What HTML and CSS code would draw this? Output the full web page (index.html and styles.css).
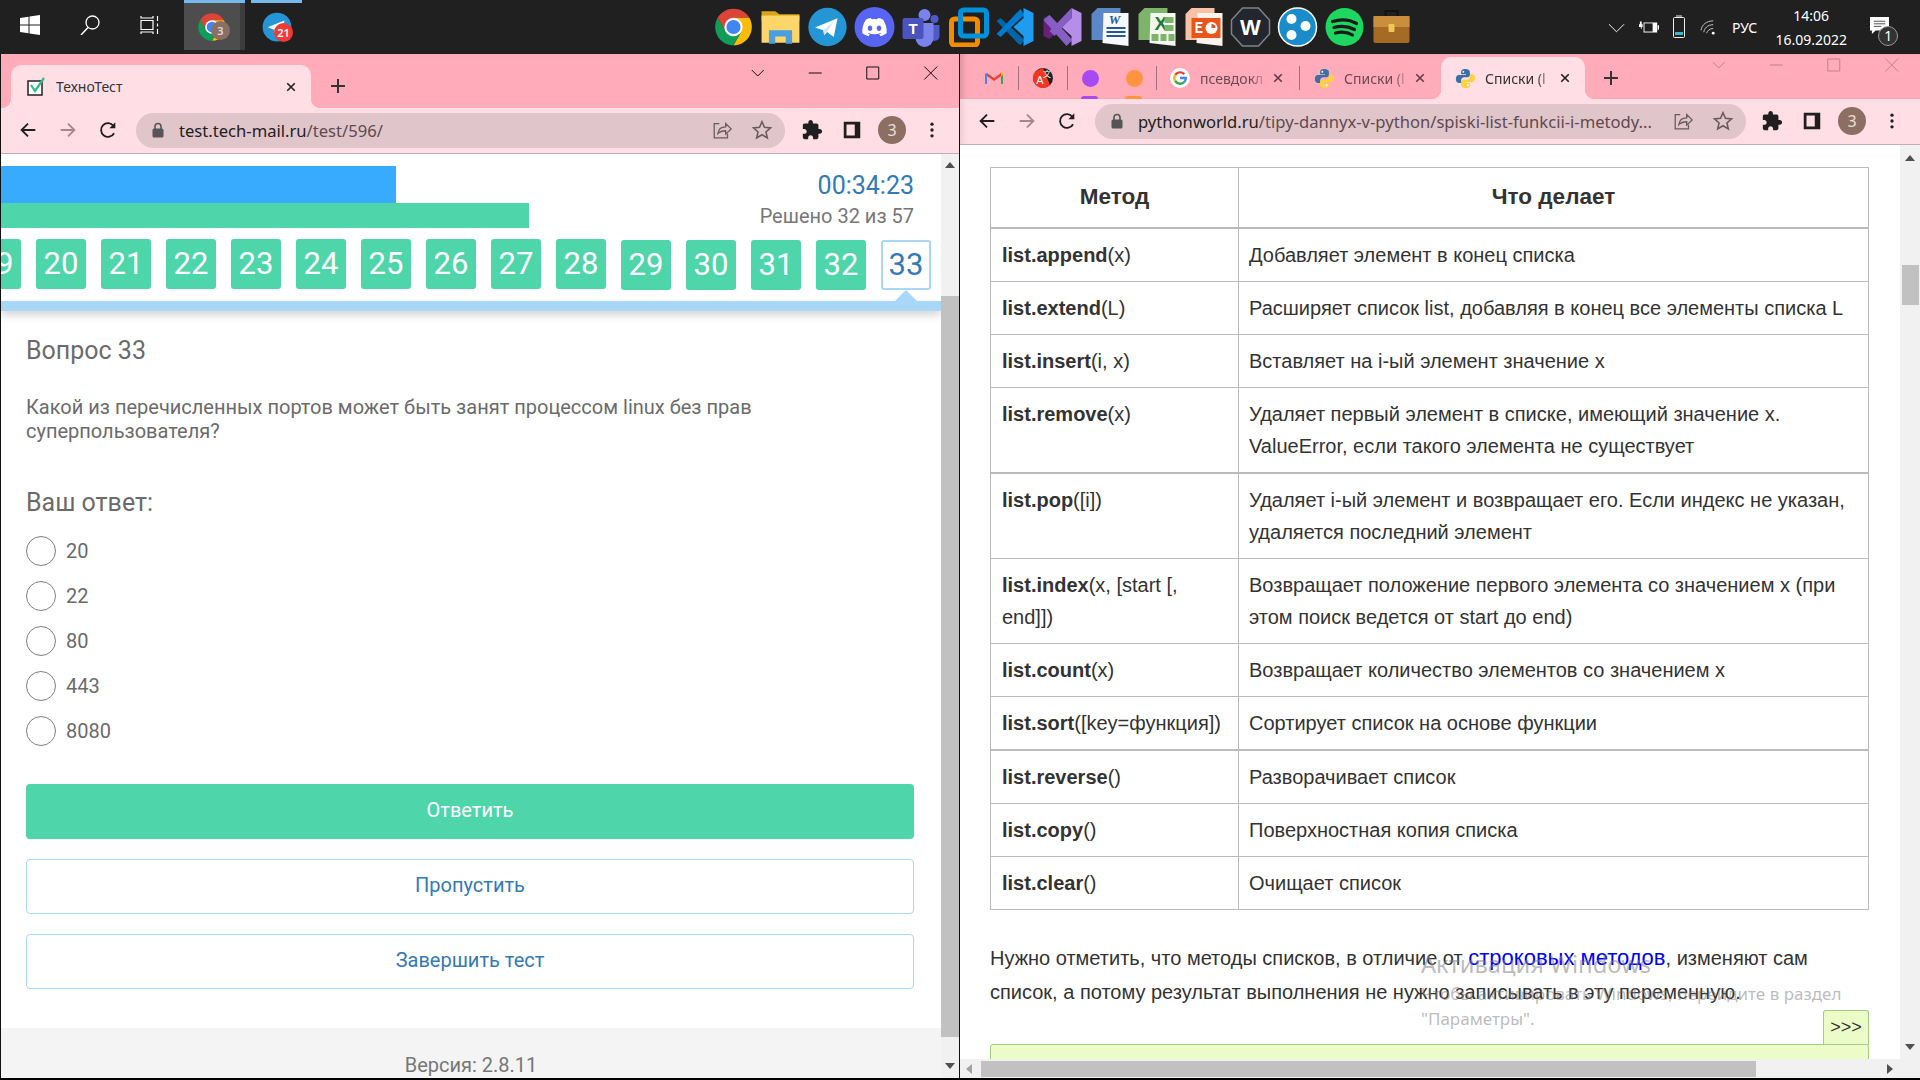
FILE: index.html
```html
<!DOCTYPE html>
<html lang="ru">
<head>
    <meta charset="UTF-8">
    <title>ТехноТест</title>
    <link rel="stylesheet" href="styles.css">
</head>
<body>

    <!-- Shared icons -->
    <svg class="sprite">
        <symbol id="i-chrome" viewBox="0 0 48 48">
            <path fill="#db4437" d="M43.05 13H24L14.5 29.5 4.95 13A22 22 0 0 1 43.05 13Z"/>
            <path fill="#fbbc05" d="M43.05 13A22 22 0 0 1 24 46L33.5 29.5 24 13Z"/>
            <path fill="#0f9d58" d="M24 46A22 22 0 0 1 4.95 13L14.5 29.5H33.5Z"/>
            <circle cx="24" cy="24" r="11" fill="#fff"/>
            <circle cx="24" cy="24" r="8.5" fill="#4285f4"/>
        </symbol>
        <symbol id="i-telegram" viewBox="0 0 48 48">
            <circle cx="24" cy="24" r="23" fill="#2496d6"/>
            <path fill="#fff" d="M9 24.5 36 13.5 31.5 36 23.5 30 20 34 19 28Z"/>
            <path fill="#cfe6f3" d="M19 28 31 18 23.5 30 20 34Z"/>
        </symbol>
        <symbol id="i-back" viewBox="0 0 24 24">
            <path fill="none" stroke="currentColor" stroke-width="2" d="M20 12H5M12 5l-7 7 7 7"/>
        </symbol>
        <symbol id="i-forward" viewBox="0 0 24 24">
            <path fill="none" stroke="currentColor" stroke-width="2" d="M4 12h15M12 5l7 7-7 7"/>
        </symbol>
        <symbol id="i-reload" viewBox="0 0 24 24">
            <path fill="none" stroke="currentColor" stroke-width="2" d="M18.6 15.5A7.5 7.5 0 1 1 18 7.6"/>
            <path fill="currentColor" d="M20 3.5v6.5h-6.5z"/>
        </symbol>
        <symbol id="i-lock" viewBox="0 0 16 16">
            <rect x="2.5" y="6.5" width="11" height="9" rx="1.5" fill="currentColor"/>
            <path fill="none" stroke="currentColor" stroke-width="1.6" d="M5 7V4.5a3 3 0 0 1 6 0V7"/>
        </symbol>
        <symbol id="i-share" viewBox="0 0 24 24">
            <path fill="none" stroke="currentColor" stroke-width="1.4" d="M9 5H3.5v15.5H18V16M7.5 16c.5-5 4-7.5 8.5-7.5V5l6 5.8-6 5.7v-3.7c-3.5 0-6.5 1-8.5 3.2z"/>
        </symbol>
        <symbol id="i-star" viewBox="0 0 24 24">
            <path fill="none" stroke="currentColor" stroke-width="1.7" d="M12 3l2.7 6.1 6.6.6-5 4.4 1.5 6.5-5.8-3.4-5.8 3.4 1.5-6.5-5-4.4 6.6-.6z"/>
        </symbol>
        <symbol id="i-puzzle" viewBox="0 0 24 24">
            <path fill="currentColor" d="M20.5 11H19V7c0-1.1-.9-2-2-2h-4V3.5C13 2.12 11.88 1 10.5 1S8 2.12 8 3.5V5H4c-1.1 0-1.99.9-1.99 2v3.8H3.5c1.49 0 2.7 1.21 2.7 2.7s-1.21 2.7-2.7 2.7H2V20c0 1.1.9 2 2 2h3.8v-1.5c0-1.49 1.21-2.7 2.7-2.7 1.49 0 2.7 1.21 2.7 2.7V22H17c1.1 0 2-.9 2-2v-4h1.5c1.38 0 2.5-1.12 2.5-2.5S21.88 11 20.5 11z"/>
        </symbol>
        <symbol id="i-panel" viewBox="0 0 24 24">
            <path fill="currentColor" fill-rule="evenodd" d="M3 3h18v18H3zM6 6v12h9V6z"/>
        </symbol>
        <symbol id="i-dots" viewBox="0 0 24 24">
            <circle cx="12" cy="5" r="2" fill="currentColor"/>
            <circle cx="12" cy="12" r="2" fill="currentColor"/>
            <circle cx="12" cy="19" r="2" fill="currentColor"/>
        </symbol>
        <symbol id="i-close" viewBox="0 0 16 16">
            <path fill="none" stroke="currentColor" stroke-width="2.2" d="M3 3l10 10M13 3L3 13"/>
        </symbol>
        <symbol id="i-plus" viewBox="0 0 16 16">
            <path fill="none" stroke="currentColor" stroke-width="2" d="M8 1v14M1 8h14"/>
        </symbol>
        <symbol id="i-python" viewBox="0 0 24 24">
            <path fill="#3a70a8" d="M12 1c-4 0-5 1.500-5 3.500V7h5.500v1H4.500C2.500 8 1 9.500 1 12.500S2.500 17 4.500 17H7v-3c0-2 1.500-3.500 3.500-3.500h4c1.500 0 2.500-1 2.500-2.500V4.500C17 2.500 15.500 1 12 1z"/>
            <path fill="#fdd23e" d="M12 23c4 0 5-1.500 5-3.500V17h-5.500v-1h8c2 0 3.500-1.500 3.500-4.500S21.500 7 19.500 7H17v3c0 2-1.500 3.500-3.500 3.500h-4C8 13.500 7 14.500 7 16v3.500C7 21.500 8.500 23 12 23z"/>
            <circle cx="9.500" cy="4.300" r="1.100" fill="#fff"/>
            <circle cx="14.500" cy="19.700" r="1.100" fill="#fff"/>
        </symbol>
        <symbol id="i-win-min" viewBox="0 0 16 16">
            <path stroke="currentColor" d="M1 8h13"/>
        </symbol>
        <symbol id="i-win-max" viewBox="0 0 16 16">
            <path fill="none" stroke="currentColor" d="M2 2h12v12H2z"/>
        </symbol>
        <symbol id="i-win-close" viewBox="0 0 16 16">
            <path fill="none" stroke="currentColor" d="M1.500 1.500l13 13M14.500 1.500l-13 13"/>
        </symbol>
        <symbol id="i-chevron" viewBox="0 0 16 16">
            <path fill="none" stroke="currentColor" d="M2 5l6 6 6-6"/>
        </symbol>
    </svg>

    <!-- Windows taskbar -->
    <header class="taskbar">
        <div class="task-cell">
            <svg class="sys-icon" viewBox="0 0 20 20"><path fill="#fff" d="M0 3l8.500-1.200V9.500H0zM9.500 1.600L20 0v9.500H9.500zM0 10.500h8.500v7.700L0 17zM9.500 10.500H20V20L9.500 18.400z"/></svg>
        </div>
        <div class="task-cell">
            <svg class="sys-icon" viewBox="0 0 20 20"><circle cx="12.500" cy="7.500" r="6.500" fill="none" stroke="#fff" stroke-width="1.300"/><path stroke="#fff" stroke-width="1.500" d="M8 12.500L1 20"/></svg>
        </div>
        <div class="task-cell">
            <svg class="sys-icon" viewBox="0 0 20 20"><path fill="none" stroke="#fff" stroke-width="1.200" d="M1 1v2h12V1M1 5.500h12v9H1zM1 19v-2h12v2M17.500 1v5M17.500 8.500v3M17.500 14v5"/></svg>
        </div>
        <div class="task-app task-app-active">
            <svg class="app-icon-small"><use href="#i-chrome"/></svg>
            <span class="badge badge-brown">3</span>
        </div>
        <div class="task-app task-app-open">
            <svg class="app-icon-small"><use href="#i-telegram"/></svg>
            <span class="badge badge-red">21</span>
        </div>

        <div class="pinned">
            <svg class="app-icon"><use href="#i-chrome"/></svg>
            <svg class="app-icon" viewBox="0 0 38 38">
                <path fill="#d9a514" d="M1 4h13l4 3h19v6H1z"/>
                <path fill="#fcd669" d="M1 8h36v26H1z"/>
                <path fill="#4a9fe0" d="M8 35V22h22v13h-6v-7H14v7z"/>
            </svg>
            <svg class="app-icon"><use href="#i-telegram"/></svg>
            <svg class="app-icon" viewBox="0 0 40 40">
                <circle cx="20" cy="20" r="20" fill="#5865f2"/>
                <path fill="#fff" d="M28.500 12.500a20 20 0 0 0-5-1.500l-.6 1.300a18 18 0 0 0-5.800 0l-.6-1.300a20 20 0 0 0-5 1.500C8.300 17.200 7.500 21.800 7.900 26.300a20 20 0 0 0 6.100 3l1.300-2-2-1 .5-.4a14.500 14.500 0 0 0 12.400 0l.5.400-2 1 1.300 2a20 20 0 0 0 6.100-3c.5-5.200-.8-9.700-3.600-13.800zM15.500 24c-1.300 0-2.300-1.200-2.300-2.700s1-2.700 2.300-2.700 2.300 1.200 2.300 2.700-1 2.700-2.300 2.700zm9 0c-1.300 0-2.300-1.200-2.300-2.700s1-2.700 2.300-2.700 2.300 1.200 2.300 2.700-1 2.700-2.300 2.700z"/>
            </svg>
            <svg class="app-icon" viewBox="0 0 40 40">
                <circle cx="33" cy="12" r="4" fill="#5059c9"/>
                <path fill="#5059c9" d="M28 18h10v11a5 5 0 0 1-10 0z"/>
                <circle cx="23" cy="8" r="6" fill="#7b83eb"/>
                <path fill="#7b83eb" d="M14 16h18v15a9 9 0 0 1-18 0z"/>
                <rect x="1" y="11" width="21" height="21" rx="2" fill="#4b53bc"/>
                <text x="11.500" y="27" class="svg-teams">T</text>
            </svg>
            <svg class="app-icon" viewBox="0 0 40 40">
                <rect x="3" y="12" width="26" height="26" rx="3" fill="none" stroke="#f38b00" stroke-width="5"/>
                <rect x="12" y="3" width="26" height="26" rx="3" fill="none" stroke="#0091da" stroke-width="5"/>
            </svg>
            <svg class="app-icon" viewBox="0 0 40 40">
                <path fill="#0065a9" d="M1 14l4-3 24 22-4 5-2-1z"/>
                <path fill="#007acc" d="M1 27l4 3 24-22-4-6z"/>
                <path fill="#1f9cf0" d="M28 1l10 5v28l-10 5zM28 11L18 20l10 9z"/>
            </svg>
            <svg class="app-icon" viewBox="0 0 40 40">
                <path fill="#68217a" d="M1 11l6-3 12 12-12 12-6-3z"/>
                <path fill="#865fc5" d="M7 8l23 25-6 6L1 13z"/>
                <path fill="#b48ee8" d="M29 1l10 5v28l-10 5zM29 11L19 20l10 9z"/>
                <path fill="#865fc5" d="M29 1L7 24l5 5L29 11z"/>
            </svg>
            <svg class="app-icon" viewBox="0 0 40 40">
                <path fill="#5b86c8" d="M8 1h23v32H2V7z"/>
                <path fill="#f5f8fc" d="M14 6h25v33l-26-3z"/>
                <text x="25" y="17" class="svg-word">W</text>
                <path stroke="#2a5699" stroke-width="2" d="M17 21h19M17 25h19M17 29h19"/>
            </svg>
            <svg class="app-icon" viewBox="0 0 40 40">
                <path fill="#7db36a" d="M8 1h23v32H2V7z"/>
                <path fill="#f2f8ee" d="M14 6h25v33l-26-3z"/>
                <text x="18" y="23" class="svg-excel">X</text>
                <path fill="#7fb36d" d="M28 10h9v6h-9zM28 18h9v6h-9zM15 27h7v7h-7zM24 27h6v7h-6zM32 27h6v7h-6z"/>
            </svg>
            <svg class="app-icon" viewBox="0 0 40 40">
                <path fill="#f7c2a5" d="M8 1h23v32H2V7z"/>
                <path fill="#fdf3ec" d="M14 6h25v33l-26-3z"/>
                <path fill="#e9541a" d="M8 11h29v20H8z"/>
                <path fill="#fff" d="M12 15h7v2h-5v2h4v2h-4v3h5v2h-7z"/>
                <circle cx="28" cy="21" r="6" fill="#fff"/>
                <path fill="#e9541a" d="M28 21v-4a4 4 0 0 1 4 4z"/>
            </svg>
            <svg class="app-icon" viewBox="0 0 40 40">
                <path fill="#23262c" stroke="#7d828a" stroke-width="1.500" d="M12 1h16l11 12v14L28 39H12L1 27V13z"/>
                <text x="20" y="28" class="svg-wind">W</text>
            </svg>
            <svg class="app-icon" viewBox="0 0 40 40">
                <circle cx="20" cy="20" r="19" fill="#1b8ccb" stroke="#fff" stroke-width="1.500"/>
                <circle cx="14" cy="12" r="5" fill="#fff"/>
                <circle cx="28" cy="19" r="5" fill="#fff"/>
                <circle cx="14" cy="28" r="5" fill="#fff"/>
            </svg>
            <svg class="app-icon" viewBox="0 0 40 40">
                <circle cx="20" cy="20" r="19" fill="#1ed760"/>
                <path fill="none" stroke="#1b1b1b" stroke-width="3.200" stroke-linecap="round" d="M8 14.500c8-2.500 17-2 24 2M9.500 20.500c7-2 14-1.500 20.500 2M11 26c6-1.500 12-1 17 2"/>
            </svg>
            <svg class="app-icon" viewBox="0 0 40 40">
                <path fill="none" stroke="#111" stroke-width="2" d="M14 9V4h12v5"/>
                <rect x="2" y="9" width="36" height="27" rx="2" fill="#a56a24"/>
                <path fill="#c98f3e" d="M2 9h36v11H2z"/>
                <rect x="17" y="17" width="6" height="8" rx="1" fill="#f3c458"/>
            </svg>
        </div>

        <!-- Tray -->
        <div class="tray">
            <svg class="tray-chevron" viewBox="0 0 18 10"><path fill="none" stroke="#fff" d="M1 1l8 8 8-8"/></svg>
            <svg class="tray-battery" viewBox="0 0 22 16"><path fill="#fff" d="M1 2h2v3h1v3H3v2H2V8H0V5h1zM5 3h15v11H5z"/><path fill="#202020" d="M6 4h9v9H6z"/><path fill="#fff" d="M20.500 6H22v5h-1.500z"/></svg>
            <svg class="tray-phone" viewBox="0 0 14 24"><path fill="#202020" stroke="#eee" d="M2.500 2.500h9a1 1 0 0 1 1 1v18a1 1 0 0 1-1 1h-9a1 1 0 0 1-1-1v-18a1 1 0 0 1 1-1zM4 1h6"/><path fill="#39b6c9" d="M3 17h8v3H3z"/></svg>
            <svg class="tray-wifi" viewBox="0 0 18 18"><path fill="none" stroke="#ccc" d="M1 12C2 6 7 2 14 2M4 14c.5-4 4-8 10-8M7 15c.5-2 3-5 7-5"/><circle cx="14" cy="15" r="1.500" fill="#fff"/></svg>
            <span class="tray-lang">РУС</span>
            <div class="tray-clock">
                <span>14:06</span>
                <span>16.09.2022</span>
            </div>
            <div class="tray-note">
                <svg viewBox="0 0 20 20" preserveAspectRatio="none"><path fill="#fff" d="M0 0h20v16H6l-4 4v-4H0z"/><path stroke="#444" d="M4 5h12M4 8h12M4 11h8"/></svg>
                <span class="note-count">1</span>
            </div>
        </div>
    </header>

    <main class="desktop">

        <!-- Left window -->
        <section class="window window-left">
            <div class="tabstrip tabstrip-left">
                <div class="tab tab-active tab-wide">
                    <svg class="favicon" viewBox="0 0 20 20">
                        <path fill="#fff" stroke="#222" stroke-width="1.500" d="M2 4h14v14H2z"/>
                        <path fill="none" stroke="#2fb98c" stroke-width="2.200" d="M5 8l4 6 9-13"/>
                    </svg>
                    <span class="tab-title">ТехноТест</span>
                    <svg class="tab-close"><use href="#i-close"/></svg>
                </div>
                <svg class="tab-plus"><use href="#i-plus"/></svg>
                <div class="win-controls">
                    <svg><use href="#i-chevron"/></svg>
                    <svg><use href="#i-win-min"/></svg>
                    <svg><use href="#i-win-max"/></svg>
                    <svg><use href="#i-win-close"/></svg>
                </div>
            </div>
            <div class="toolbar">
                <span class="tool"><svg><use href="#i-back"/></svg></span>
                <span class="tool tool-off"><svg><use href="#i-forward"/></svg></span>
                <span class="tool"><svg><use href="#i-reload"/></svg></span>
                <div class="omnibox">
                    <svg class="lock"><use href="#i-lock"/></svg>
                    <span class="url"><b>test.tech-mail.ru</b>/test/596/</span>
                    <span class="omni-tool"><svg><use href="#i-share"/></svg></span>
                    <span class="omni-tool"><svg><use href="#i-star"/></svg></span>
                </div>
                <span class="tool"><svg><use href="#i-puzzle"/></svg></span>
                <span class="tool"><svg><use href="#i-panel"/></svg></span>
                <span class="tool"><span class="avatar">3</span></span>
                <span class="tool"><svg class="dots"><use href="#i-dots"/></svg></span>
            </div>

            <div class="viewport">
                <div class="page test-page">
                    <div class="progress">
                        <div class="bars">
                            <div class="bar bar-time" style="width: 395px"></div>
                            <div class="bar bar-done" style="width: 528px"></div>
                        </div>
                        <div class="stats">
                            <div class="timer">00:34:23</div>
                            <div class="solved">Решено 32 из 57</div>
                        </div>
                    </div>

                    <div class="numbers">
                        <span class="num">19</span>
                        <span class="num">20</span>
                        <span class="num">21</span>
                        <span class="num">22</span>
                        <span class="num">23</span>
                        <span class="num">24</span>
                        <span class="num">25</span>
                        <span class="num">26</span>
                        <span class="num">27</span>
                        <span class="num">28</span>
                        <span class="num num-low">29</span>
                        <span class="num num-low">30</span>
                        <span class="num num-low">31</span>
                        <span class="num num-low">32</span>
                        <span class="num num-low num-current">33</span>
                    </div>
                    <div class="numbers-line"></div>

                    <div class="question">
                        <h2 class="q-title">Вопрос 33</h2>
                        <p class="q-text">Какой из перечисленных портов может быть занят процессом linux без прав суперпользователя?</p>
                        <h3 class="q-answer">Ваш ответ:</h3>
                        <div class="options">
                            <label class="option"><span class="radio"></span>20</label>
                            <label class="option"><span class="radio"></span>22</label>
                            <label class="option"><span class="radio"></span>80</label>
                            <label class="option"><span class="radio"></span>443</label>
                            <label class="option"><span class="radio"></span>8080</label>
                        </div>
                        <button class="btn btn-green">Ответить</button>
                        <button class="btn btn-line">Пропустить</button>
                        <button class="btn btn-line">Завершить тест</button>
                    </div>
                    <footer class="version">Версия: 2.8.11</footer>
                </div>
                <div class="vbar vbar-left">
                    <i class="arrow-up"></i>
                    <b class="thumb"></b>
                    <i class="arrow-down"></i>
                </div>
            </div>
        </section>

        <!-- Right window -->
        <section class="window window-right">
            <div class="tabstrip tabstrip-right">
                <div class="pin">
                    <svg class="favicon" viewBox="0 0 20 20">
                        <path fill="#ea4335" d="M3 5l7 5 7-5v3l-7 5-7-5z"/>
                        <path fill="#4285f4" d="M1 6l2-1v11H1z"/>
                        <path fill="#34a853" d="M17 5l2 1v10h-2z"/>
                        <path fill="#fbbc05" d="M17 5l2-1v3l-2 1z"/>
                    </svg>
                </div>
                <i class="sep"></i>
                <div class="pin">
                    <svg class="favicon" viewBox="0 0 20 20">
                        <circle cx="10" cy="10" r="10" fill="#222"/>
                        <path fill="#f4361f" d="M10 0L17 17A10 10 0 0 1 10 20 10 10 0 0 1 3 3z"/>
                        <text x="7" y="16" class="svg-a">A</text>
                        <text x="14" y="9" class="svg-han">文</text>
                    </svg>
                </div>
                <i class="sep"></i>
                <div class="pin pin-group pin-purple"><span class="dot"></span></div>
                <div class="pin pin-group pin-orange"><span class="dot"></span></div>
                <i class="sep"></i>
                <div class="tab tab-plain">
                    <svg class="favicon" viewBox="0 0 20 20">
                        <circle cx="10" cy="10" r="10" fill="#fff"/>
                        <path fill="none" stroke="#ea4335" stroke-width="2.400" d="M14.300 6.200A5.800 5.800 0 0 0 5.200 7"/>
                        <path fill="none" stroke="#fbbc05" stroke-width="2.400" d="M5.200 7a5.800 5.800 0 0 0 0 6"/>
                        <path fill="none" stroke="#34a853" stroke-width="2.400" d="M5.200 13a5.800 5.800 0 0 0 9.300.7"/>
                        <path fill="none" stroke="#4285f4" stroke-width="2.400" d="M14.500 13.700A5.800 5.800 0 0 0 15.800 10H10"/>
                    </svg>
                    <span class="tab-title">псевдокл</span>
                    <svg class="tab-close"><use href="#i-close"/></svg>
                </div>
                <i class="sep"></i>
                <div class="tab tab-plain tab-py">
                    <svg class="favicon"><use href="#i-python"/></svg>
                    <span class="tab-title">Списки (l</span>
                    <svg class="tab-close"><use href="#i-close"/></svg>
                </div>
                <div class="tab tab-active tab-py-active">
                    <svg class="favicon"><use href="#i-python"/></svg>
                    <span class="tab-title">Списки (l</span>
                    <svg class="tab-close"><use href="#i-close"/></svg>
                </div>
                <svg class="tab-plus"><use href="#i-plus"/></svg>
                <div class="win-controls win-controls-off">
                    <svg><use href="#i-chevron"/></svg>
                    <svg><use href="#i-win-min"/></svg>
                    <svg><use href="#i-win-max"/></svg>
                    <svg><use href="#i-win-close"/></svg>
                </div>
            </div>
            <div class="toolbar">
                <span class="tool"><svg><use href="#i-back"/></svg></span>
                <span class="tool tool-off"><svg><use href="#i-forward"/></svg></span>
                <span class="tool"><svg><use href="#i-reload"/></svg></span>
                <div class="omnibox">
                    <svg class="lock"><use href="#i-lock"/></svg>
                    <span class="url"><b>pythonworld.ru</b>/tipy-dannyx-v-python/spiski-list-funkcii-i-metody...</span>
                    <span class="omni-tool"><svg><use href="#i-share"/></svg></span>
                    <span class="omni-tool"><svg><use href="#i-star"/></svg></span>
                </div>
                <span class="tool"><svg><use href="#i-puzzle"/></svg></span>
                <span class="tool"><svg><use href="#i-panel"/></svg></span>
                <span class="tool"><span class="avatar">3</span></span>
                <span class="tool"><svg class="dots"><use href="#i-dots"/></svg></span>
            </div>

            <div class="viewport">
                <div class="page doc-page">
                    <table class="methods">
                        <thead>
                            <tr>
                                <th class="col-method">Метод</th>
                                <th>Что делает</th>
                            </tr>
                        </thead>
                        <tbody>
                            <tr><td><b>list.append</b>(x)</td><td>Добавляет элемент в конец списка</td></tr>
                            <tr><td><b>list.extend</b>(L)</td><td>Расширяет список list, добавляя в конец все элементы списка L</td></tr>
                            <tr><td><b>list.insert</b>(i, x)</td><td>Вставляет на i-ый элемент значение x</td></tr>
                            <tr class="row-thick"><td><b>list.remove</b>(x)</td><td>Удаляет первый элемент в списке, имеющий значение x. ValueError, если такого элемента не существует</td></tr>
                            <tr><td><b>list.pop</b>([i])</td><td>Удаляет i-ый элемент и возвращает его. Если индекс не указан, удаляется последний элемент</td></tr>
                            <tr><td><b>list.index</b>(x, [start [, end]])</td><td>Возвращает положение первого элемента со значением x (при этом поиск ведется от start до end)</td></tr>
                            <tr><td><b>list.count</b>(x)</td><td>Возвращает количество элементов со значением x</td></tr>
                            <tr class="row-thick"><td><b>list.sort</b>([key=функция])</td><td>Сортирует список на основе функции</td></tr>
                            <tr><td><b>list.reverse</b>()</td><td>Разворачивает список</td></tr>
                            <tr><td><b>list.copy</b>()</td><td>Поверхностная копия списка</td></tr>
                            <tr><td><b>list.clear</b>()</td><td>Очищает список</td></tr>
                        </tbody>
                    </table>
                    <p class="doc-text">Нужно отметить, что методы списков, в отличие от <a href="#">строковых методов</a>, изменяют сам список, а потому результат выполнения не нужно записывать в эту переменную.</p>
                    <div class="code-tab">&gt;&gt;&gt;</div>
                    <div class="code-box"></div>
                </div>
                <div class="vbar vbar-right">
                    <i class="arrow-up"></i>
                    <b class="thumb"></b>
                    <i class="arrow-down"></i>
                </div>
            </div>
            <div class="hbar">
                <i class="arrow-left"></i>
                <b class="hthumb"></b>
                <i class="arrow-right"></i>
            </div>
        </section>

        <!-- Windows activation watermark, lies over the right window -->
        <div class="watermark">
            <div class="wm-title">Активация Windows</div>
            <div class="wm-text">Чтобы активировать Windows, перейдите в раздел<br>"Параметры".</div>
        </div>
    </main>

</body>
</html>
```

FILE: styles.css
```css
* {
    box-sizing: border-box;
}

body {
    margin: 0;
    width: 1920px;
    height: 1080px;
    overflow: hidden;
    background: #000;
    display: flex;
    flex-direction: column;
    font-family: "Roboto", sans-serif;
}

.sprite {
    display: none;
}

/* Taskbar */
.taskbar {
    height: 54px;
    flex: none;
    background: #202020;
    display: flex;
    color: #fff;
    font-family: "Noto Sans", sans-serif;
}

.task-cell {
    width: 60px;
    height: 50px;
    display: flex;
    align-items: center;
    justify-content: center;
}

.sys-icon {
    width: 20px;
    height: 20px;
}

.task-app {
    height: 50px;
    position: relative;
    display: flex;
    justify-content: center;
    align-items: center;
    border-top: 3px solid #76b9ed;
}

.task-app-active {
    width: 61px;
    margin-left: 4px;
    background: #4d4d4d;
    box-shadow: inset -5px 0 0 #3d3d3d;
    padding-right: 5px;
}

.task-app-open {
    width: 51px;
    margin-left: 6px;
}

.app-icon-small {
    width: 30px;
    height: 30px;
}

.badge {
    position: absolute;
    width: 19px;
    height: 19px;
    border-radius: 50%;
    font-size: 11px;
    font-weight: 600;
    display: flex;
    align-items: center;
    justify-content: center;
    top: 20px;
}

.badge-brown {
    left: 27px;
    top: 18px;
    background: #8d6e63;
    color: #ddd;
}

.badge-red {
    left: 23px;
    background: #ef3b36;
}

.pinned {
    position: absolute;
    left: 710px;
    top: 7px;
    display: flex;
}

.app-icon {
    width: 47px;
    height: 40px;
}

.svg-teams {
    font: bold 15px "Liberation Sans", sans-serif;
    fill: #fff;
    text-anchor: middle;
}

.svg-word {
    font: italic bold 13px "Liberation Serif", serif;
    fill: #2a5699;
    text-anchor: middle;
}

.svg-excel {
    font: bold 19px "Liberation Sans", sans-serif;
    fill: #1f7a35;
}

.svg-wind {
    font: bold 22px "Liberation Sans", sans-serif;
    fill: #fff;
    text-anchor: middle;
}

.svg-a {
    font: 11px "Liberation Sans", sans-serif;
    fill: #fff;
    text-anchor: middle;
}

.svg-han {
    font: 8px "Noto Sans CJK SC", sans-serif;
    fill: #fff;
    text-anchor: middle;
}

.tray {
    position: absolute;
    left: 1608px;
    top: 0;
    width: 312px;
    height: 54px;
    display: flex;
    align-items: center;
}

.tray-chevron {
    width: 17px;
    height: 10px;
    margin-top: 1px;
}

.tray-battery {
    width: 20px;
    height: 16px;
    margin-left: 14px;
}

.tray-phone {
    width: 14px;
    height: 24px;
    margin-left: 13px;
}

.tray-wifi {
    width: 17px;
    height: 17px;
    margin-left: 14px;
}

.tray-lang {
    font-size: 14px;
    margin-left: 15px;
}

.tray-clock {
    width: 90px;
    margin-left: 9px;
    display: flex;
    flex-direction: column;
    align-items: center;
    font-size: 14px;
    line-height: 24px;
    margin-top: 2px;
}

.tray-note {
    position: relative;
    width: 19px;
    height: 17px;
    margin-left: 14px;
    margin-top: -3px;
}

.tray-note svg {
    display: block;
    width: 19px;
    height: 17px;
}

.note-count {
    position: absolute;
    left: 8px;
    top: 9px;
    width: 20px;
    height: 20px;
    border-radius: 50%;
    border: 1px solid #999;
    background: #333;
    font-size: 14px;
    line-height: 18px;
    text-align: center;
}

/* Browser windows */
.desktop {
    height: 1024px;
    flex: none;
    display: flex;
    position: relative;
}

.window {
    width: 960px;
    height: 1024px;
    display: flex;
    flex-direction: column;
    background: #fff;
}

.window-left {
    border-left: 1px solid #111;
    border-right: 1px solid #111;
}

.window-right {
    box-shadow: inset 7px 0 6px -4px rgba(0, 0, 0, 0.22);
}

.tabstrip {
    background: #ffabb9;
    display: flex;
    align-items: flex-end;
    flex: none;
    font-family: "Noto Sans", sans-serif;
    font-size: 14px;
    color: #333;
}

.tabstrip-left {
    height: 54px;
    padding-left: 10px;
}

.tabstrip-right {
    height: 45px;
    padding-left: 10px;
    box-shadow: inset 7px 0 6px -4px rgba(0, 0, 0, 0.15);
}

.tab {
    display: flex;
    align-items: center;
    position: relative;
    flex: none;
}

.tab-active {
    background: #ffdee5;
    border-radius: 10px 10px 0 0;
}

/* concave corners at the tab foot */
.tab-active::before,
.tab-active::after {
    content: "";
    position: absolute;
    bottom: 0;
    width: 10px;
    height: 10px;
}

.tab-active::before {
    left: -10px;
    background: radial-gradient(circle at 0 0, transparent 10px, #ffdee5 10.5px);
}

.tab-active::after {
    right: -10px;
    background: radial-gradient(circle at 100% 0, transparent 10px, #ffdee5 10.5px);
}

.tab-wide {
    width: 300px;
    height: 43px;
    padding-left: 15px;
}

.favicon {
    width: 20px;
    height: 20px;
    flex: none;
}

.tab-title {
    margin-left: 10px;
    overflow: hidden;
    white-space: nowrap;
    flex: 1;
}

.tab-close {
    width: 12px;
    height: 12px;
    margin-right: 14px;
    flex: none;
    color: #222;
}

.tab-plus {
    width: 16px;
    height: 16px;
    margin-left: 19px;
    margin-bottom: 14px;
    color: #333;
    flex: none;
}

.tabstrip-right .tab-plus {
    margin-bottom: 13px;
    margin-left: 18px;
}

.pin {
    width: 48px;
    height: 42px;
    display: flex;
    align-items: center;
    justify-content: center;
    flex: none;
}

.sep {
    width: 1px;
    height: 24px;
    background: #a0717c;
    margin-bottom: 9px;
    flex: none;
}

.pin-group {
    width: 44px;
    position: relative;
}

.dot {
    width: 17px;
    height: 17px;
    border-radius: 50%;
}

.pin-group::after {
    content: "";
    position: absolute;
    bottom: 0;
    left: 13px;
    width: 17px;
    height: 3px;
    border-radius: 3px 3px 0 0;
}

.pin-purple .dot,
.pin-purple::after {
    background: #a64bf4;
}

.pin-orange .dot,
.pin-orange::after {
    background: #ff9340;
}

.tab-plain {
    width: 142px;
    height: 42px;
    padding-left: 13px;
    color: #6b4a55;
}

.tab-plain .tab-title,
.tab-py-active .tab-title {
    -webkit-mask-image: linear-gradient(to right, #000 70%, transparent 95%);
    mask-image: linear-gradient(to right, #000 70%, transparent 95%);
}

.tab-plain .tab-close {
    margin-right: 15px;
    color: #5e3f48;
}

.tab-py {
    width: 141px;
    padding-left: 14px;
}

.tab-py-active {
    width: 144px;
    height: 42px;
    padding-left: 14px;
}

.tab-py .favicon,
.tab-py-active .favicon {
    width: 21px;
    height: 21px;
}

.tab-py .tab-title,
.tab-py-active .tab-title {
    margin-left: 9px;
}

.win-controls {
    margin-left: auto;
    align-self: flex-start;
    margin-top: 11px;
    display: flex;
    width: 230px;
    color: #111;
}

.tabstrip-right .win-controls {
    margin-top: 3px;
}

.win-controls svg {
    width: 57.5px;
    height: 16px;
}

.win-controls-off {
    color: #b5707f;
    opacity: 0.75;
}

.toolbar {
    height: 46px;
    flex: none;
    background: #ffdee5;
    border-bottom: 1px solid #c9abb3;
    display: flex;
    align-items: center;
    padding: 0 7px 1px 7px;
    font-family: "Noto Sans", sans-serif;
    color: #1f1f1f;
}

.window-right .toolbar {
    padding-right: 8px;
    box-shadow: inset 7px 0 6px -4px rgba(0, 0, 0, 0.08);
}

.tool {
    width: 40px;
    height: 40px;
    display: flex;
    align-items: center;
    justify-content: center;
    flex: none;
}

.tool svg {
    width: 22px;
    height: 22px;
}

.tool .dots {
    width: 20px;
    height: 20px;
}

.tool-off {
    color: #a58790;
}

.avatar {
    width: 28px;
    height: 28px;
    border-radius: 50%;
    background: #8d6e63;
    color: #e8e0dd;
    font-size: 16px;
    text-align: center;
    line-height: 28px;
}

.omnibox {
    flex: 1;
    height: 35px;
    margin: 0 7px 0 8px;
    padding: 0 3px 0 14px;
    background: #e0c5ca;
    border-radius: 18px;
    display: flex;
    align-items: center;
    min-width: 0;
}

.window-right .omnibox {
    margin-right: 6px;
}

.lock {
    width: 16px;
    height: 16px;
    color: #555;
    flex: none;
}

.url {
    margin-left: 13px;
    font-size: 16.6px;
    color: #5e4a50;
    white-space: nowrap;
    overflow: hidden;
    flex: 1;
}

.url b {
    font-weight: 400;
    color: #202020;
}

.omni-tool {
    width: 40px;
    height: 30px;
    display: flex;
    align-items: center;
    justify-content: center;
    flex: none;
    color: #6a5a5e;
}

.omni-tool svg {
    width: 22px;
    height: 22px;
}

.viewport {
    flex: 1;
    min-height: 0;
    display: flex;
}

.page {
    flex: 1;
    min-width: 0;
    overflow: hidden;
    background: #fff;
}

/* Scrollbars */
.vbar {
    flex: none;
    background: #f1f1f1;
    display: flex;
    flex-direction: column;
    align-items: center;
}

.vbar-left {
    width: 18px;
}

.vbar-right {
    width: 20px;
}

.thumb {
    display: block;
    width: 100%;
    background: #c1c1c1;
}

.vbar-left .thumb {
    height: 741px;
    margin-top: 128px;
}

.vbar-right .thumb {
    width: 17px;
    height: 40px;
    margin-top: 104px;
}

.arrow-up,
.arrow-down {
    width: 0;
    height: 0;
    border-left: 5px solid transparent;
    border-right: 5px solid transparent;
    flex: none;
}

.arrow-up {
    border-bottom: 6px solid #505050;
    margin-top: 8px;
}

.arrow-down {
    border-top: 6px solid #505050;
    margin-top: auto;
    margin-bottom: 9px;
}

.vbar-right .arrow-up {
    margin-top: 10px;
}

.hbar {
    height: 19px;
    flex: none;
    background: #f1f1f1;
    display: flex;
    align-items: center;
    padding: 0 27px 0 6px;
}

.hthumb {
    display: block;
    width: 775px;
    height: 16px;
    margin-left: 9px;
    background: #c1c1c1;
}

.arrow-left,
.arrow-right {
    width: 0;
    height: 0;
    border-top: 5px solid transparent;
    border-bottom: 5px solid transparent;
    flex: none;
}

.arrow-left {
    border-right: 6px solid #a3a3a3;
}

.arrow-right {
    border-left: 6px solid #505050;
    margin-left: auto;
}

/* Test page */
.test-page {
    padding-top: 12px;
    color: #6b6b6b;
}

.progress {
    display: flex;
    height: 62px;
}

.bars {
    flex: 1;
}

.bar-time {
    height: 37px;
    background: #38abff;
}

.bar-done {
    height: 25px;
    background: #4fd5aa;
}

.stats {
    padding-right: 27px;
    text-align: right;
}

.timer {
    font-size: 25px;
    line-height: 30px;
    margin-top: 5px;
    color: #337ab7;
}

.solved {
    font-size: 20px;
    line-height: 30px;
    color: #777;
}

.numbers {
    display: flex;
    gap: 15px;
    height: 51px;
    margin-top: 11px;
    margin-left: -30px;
}

.num {
    width: 50px;
    height: 50px;
    flex: none;
    background: #4fd5aa;
    color: #fff;
    border-radius: 3px;
    font-size: 31px;
    line-height: 50px;
    text-align: center;
}

.num-low {
    margin-top: 1px;
}

.num-current {
    position: relative;
    background: #fff;
    border: 2px solid #a9d7f7;
    color: #337ab7;
    line-height: 46px;
}

.num-current::after {
    content: "";
    position: absolute;
    left: 12px;
    top: 48px;
    border-left: 11px solid transparent;
    border-right: 11px solid transparent;
    border-bottom: 11px solid #a9d7f7;
}

.numbers-line {
    height: 10px;
    margin-top: 11px;
    background: #a9d7f7;
    box-shadow: 0 4px 8px rgba(0, 0, 0, 0.18);
}

.question {
    padding: 25px 25px 0;
}

.q-title {
    margin: 0;
    font-size: 25px;
    font-weight: 400;
    line-height: 30px;
}

.q-text {
    margin: 29px 0 0;
    width: 780px;
    font-size: 20px;
    line-height: 24px;
}

.q-answer {
    margin: 45px 0 0;
    font-size: 25px;
    font-weight: 400;
    line-height: 30px;
}

.options {
    margin-top: 10px;
}

.option {
    display: flex;
    align-items: center;
    height: 45px;
    font-size: 20px;
}

.radio {
    width: 30px;
    height: 30px;
    border: 1px solid #808080;
    border-radius: 50%;
    margin-right: 10px;
}

.btn {
    display: block;
    width: 888px;
    height: 55px;
    border-radius: 4px;
    font-family: inherit;
    font-size: 20px;
    padding: 0 0 3px;
}

.btn-green {
    margin-top: 31px;
    border: none;
    background: #4fd5aa;
    color: #fff;
}

.btn-line {
    margin-top: 20px;
    background: #fff;
    border: 1px solid #aad7fa;
    color: #337ab7;
}

.version {
    margin-top: 39px;
    height: 60px;
    padding-top: 25px;
    background: #f4f4f4;
    font-size: 20px;
    line-height: 24px;
    text-align: center;
    color: #777;
}

/* Docs page */
.doc-page {
    padding: 22px 0 0 30px;
    font-family: "Liberation Sans", sans-serif;
    font-size: 20px;
    color: #333;
}

.methods {
    width: 879px;
    border-collapse: collapse;
    table-layout: fixed;
    line-height: 32px;
}

.methods th,
.methods td {
    border: 1px solid #bbb;
    padding: 10px;
    vertical-align: top;
    text-align: left;
}

.methods td:first-child {
    padding-left: 11px;
}

.methods th {
    height: 60px;
    padding: 13px 10px;
    font-size: 22.5px;
    text-align: center;
    border-bottom: 2px solid #bbb;
}

.col-method {
    width: 248px;
}

.methods b {
    color: #333;
}

.row-thick td {
    border-bottom: 2px solid #bbb;
}

.doc-text {
    width: 879px;
    margin: 31px 0 0;
    line-height: 34px;
}

/* the site sets its inline links larger than the body text */
.doc-text a {
    color: #00f;
    font-size: 22px;
    text-decoration: none;
}

.code-tab {
    width: 46px;
    height: 35px;
    margin-left: 833px;
    margin-top: 1px;
    background: #ebfcc8;
    border: 1px solid #a4cc80;
    border-bottom: none;
    border-radius: 3px 3px 0 0;
    font-size: 18px;
    line-height: 33px;
    text-align: center;
}

.code-box {
    width: 879px;
    height: 80px;
    margin-top: -1px;
    background: #ebfcc8;
    border: 1px solid #a4cc80;
    border-radius: 3px;
}

/* Watermark */
.watermark {
    position: absolute;
    left: 1421px;
    top: 895px;
    font-family: "Noto Sans", sans-serif;
    color: rgba(130, 130, 130, 0.55);
    pointer-events: none;
}

.wm-title {
    font-size: 23.7px;
    line-height: 30px;
}

.wm-text {
    margin-top: 3px;
    font-size: 17px;
    line-height: 24.5px;
}
```
